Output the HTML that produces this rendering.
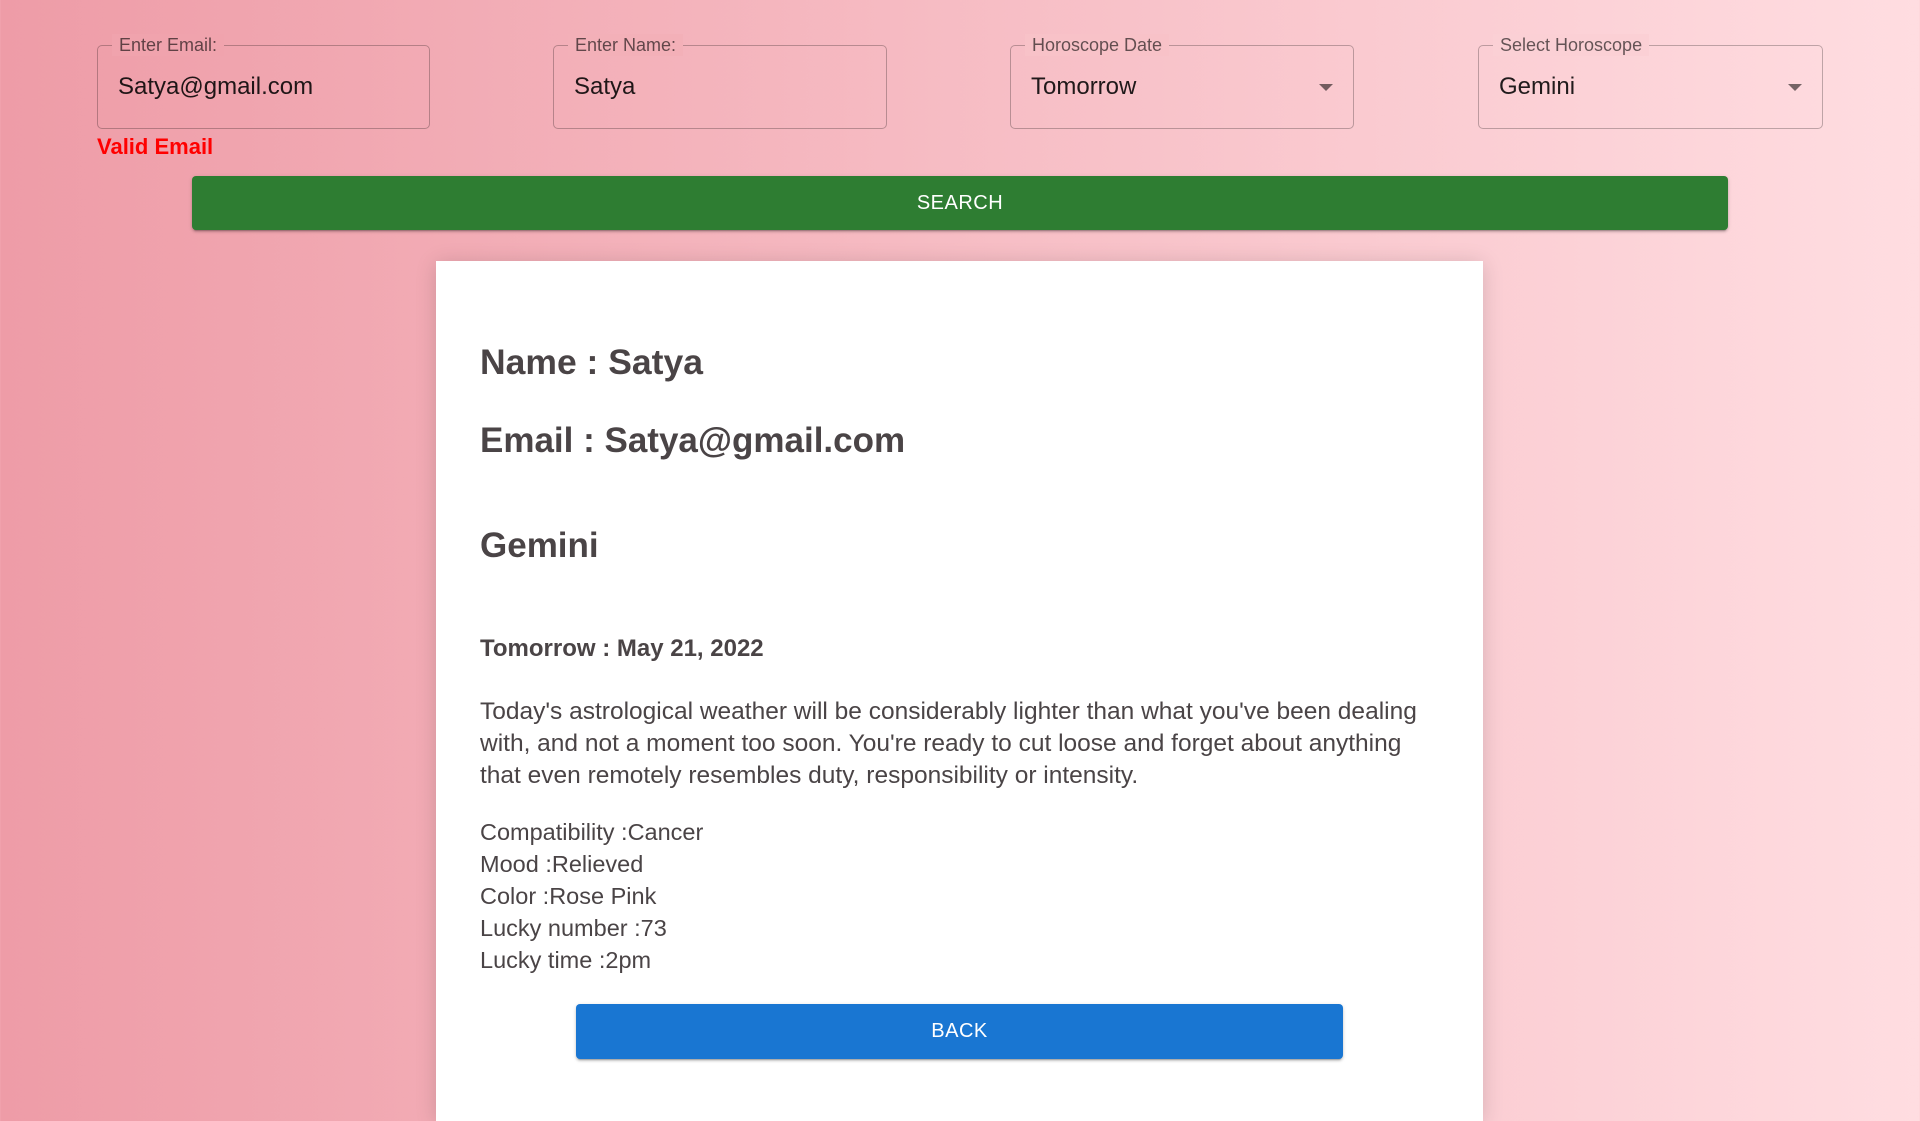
<!DOCTYPE html>
<html><head><meta charset="utf-8"><style>
*{box-sizing:border-box;margin:0;padding:0}
body{width:1920px;height:1105px;overflow:hidden;background:linear-gradient(to right,#ee9ca7,#ffdde1);font-family:"Liberation Sans",Arial,sans-serif;position:relative}
.f{position:absolute;top:45px;height:84px;border:1px solid rgba(0,0,0,0.25);border-radius:5px}
.f label{position:absolute;top:-12px;left:14px;padding:0 7px;font-size:18px;line-height:22px;color:rgba(0,0,0,0.6)}
.f .v{position:absolute;left:20px;top:27px;font-size:24px;color:rgba(0,0,0,0.87)}
.f .a{position:absolute;right:20px;top:38px;width:0;height:0;border-left:7px solid transparent;border-right:7px solid transparent;border-top:7px solid rgba(0,0,0,0.54)}
.btn{position:absolute;color:#fff;font-size:20px;text-align:center;border-radius:4px;box-shadow:0 3px 1px -2px rgba(0,0,0,.2),0 2px 2px rgba(0,0,0,.14),0 1px 5px rgba(0,0,0,.12);letter-spacing:0.5px}
.card{position:absolute;left:436px;top:261px;width:1047px;height:860px;background:#fff;box-shadow:0 2px 20px rgba(0,0,0,0.15)}
.c{position:absolute;left:44px;color:#4a4446;white-space:nowrap}
</style></head><body>
<div class="f" style="left:97px;width:333px"><label style="background:#f0a3ad">Enter Email:</label><div class="v">Satya@gmail.com</div></div>
<div class="f" style="left:553px;width:334px"><label style="background:#f3b0b8">Enter Name:</label><div class="v">Satya</div></div>
<div class="f" style="left:1010px;width:344px"><label style="background:#f8c2c8">Horoscope Date</label><div class="v">Tomorrow</div><div class="a"></div></div>
<div class="f" style="left:1478px;width:345px"><label style="background:#fbd0d5">Select Horoscope</label><div class="v">Gemini</div><div class="a"></div></div>
<div style="position:absolute;left:97px;top:134px;font-size:22px;font-weight:bold;color:#ff0000">Valid Email</div>
<div class="btn" style="left:192px;top:176px;width:1536px;height:54px;line-height:54px;background:#2e7d32">SEARCH</div>
<div class="card">
<div class="c" style="top:81px;font-size:35.5px;font-weight:bold">Name : Satya</div>
<div class="c" style="top:160px;font-size:35px;font-weight:bold">Email : Satya@gmail.com</div>
<div class="c" style="top:265px;font-size:35px;font-weight:bold">Gemini</div>
<div class="c" style="top:374px;font-size:24px;font-weight:bold">Tomorrow : May 21, 2022</div>
<div class="c" style="top:435px;font-size:24.5px;line-height:32px">Today's astrological weather will be considerably lighter than what you've been dealing<br>with, and not a moment too soon. You're ready to cut loose and forget about anything<br>that even remotely resembles duty, responsibility or intensity.</div>
<div class="c" style="top:555px;font-size:23.5px;line-height:32px">Compatibility :Cancer<br>Mood :Relieved<br>Color :Rose Pink<br>Lucky number :73<br>Lucky time :2pm</div>
<div class="btn" style="left:140px;top:743px;width:767px;height:55px;line-height:55px;background:#1976d2">BACK</div>
</div>
</body></html>
